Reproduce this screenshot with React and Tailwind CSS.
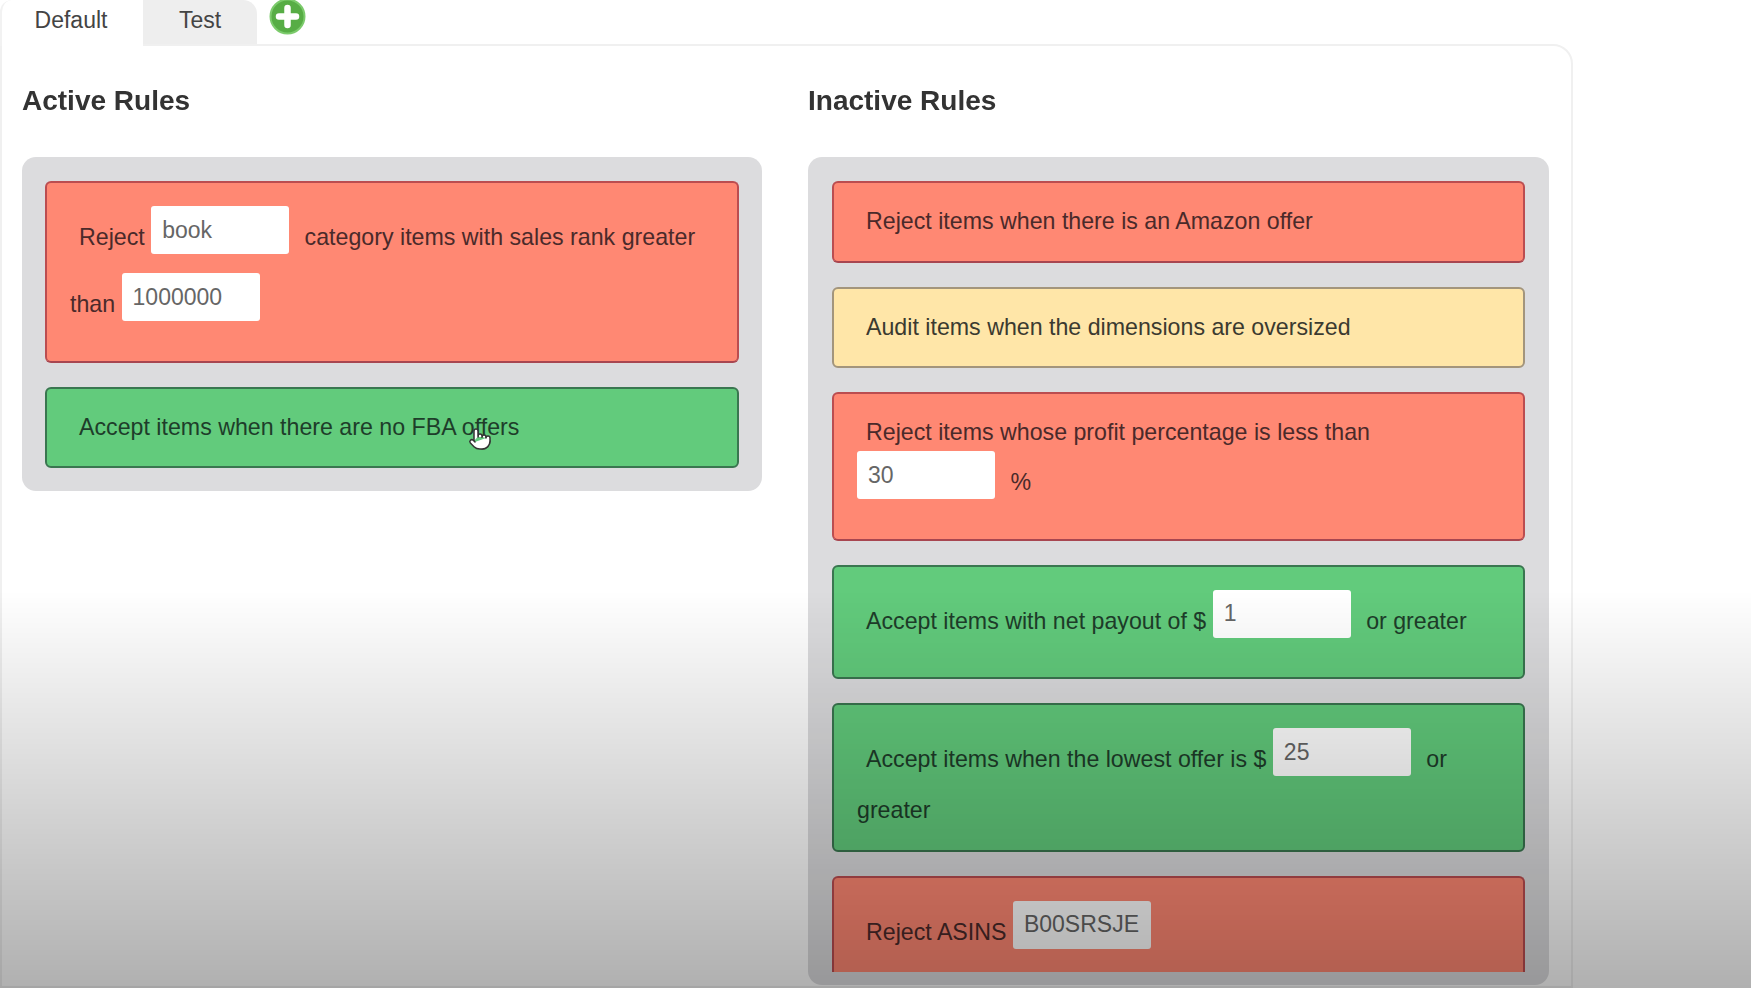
import React from 'react'
import { Pointer } from 'lucide-react'

const tones = {
  red: 'bg-[#ff8873] border-[#bb4d50] border-b-[#a84650] text-[#4a2a2a]',
  green: 'bg-[#62cb7c] border-[#3a7650] text-[#1e3d2a]',
  yellow: 'bg-[#ffe6a8] border-[#a3957c] text-[#3b3a30]',
}

const Field = ({ value }) => (
  <input
    readOnly
    defaultValue={value}
    className="mt-[2px] mb-[17px] mr-[9px] inline-block h-[48px] w-[138px] rounded-[3px] bg-white px-[11px] align-[7px] indent-0 text-[23px] text-[#666] outline-none"
  />
)

const Rule = ({ tone, children }) => (
  <div className={`relative shrink-0 rounded-[6px] border-2 px-[23px] pt-[21px] pb-[22.5px] indent-[9px] text-[23.2px] leading-[34px] ${tones[tone]}`}>
    {children}
  </div>
)

const PlusBadge = () => (
  <svg width="37" height="37" viewBox="0 0 37 37" className="ml-[12px] -mt-[2px] shrink-0">
    <circle cx="18.5" cy="18.5" r="17" fill="#57ad45" stroke="#7ccb6c" strokeWidth="2" />
    <path d="M18.5 10v17M10 18.5h17" fill="none" stroke="#fff" strokeLinecap="round" strokeWidth="6.5" />
  </svg>
)

const App = () => {
  return (
    <div className="relative h-[988px] overflow-hidden bg-white font-['Liberation_Sans',Arial,sans-serif] text-[#333]">
      <div className="w-[1573px] blur-[0.7px]">
        <div className="relative z-10 flex h-[44px] items-start text-[23px] leading-[40px]">
          <div className="flex h-[46px] w-[143px] justify-center rounded-tl-[12px] border-l-2 border-[#f2f2f2] bg-white pr-[3px] text-[#444]">
            Default
          </div>
          <div className="flex h-[44px] w-[114px] justify-center rounded-tr-[14px] bg-[#eeeeee] text-[#444]">
            Test
          </div>
          <PlusBadge />
        </div>

        <div className="flex h-[944px] gap-[46px] rounded-tr-[20px] border-2 border-[#f0f0f0] pl-[20px] pr-[21px]">
          <div className="w-[740px] shrink-0">
            <h2 className="mt-[39px] mb-[40px] text-[28px] font-bold leading-[32px]">Active Rules</h2>
            <div className="flex flex-col gap-[24px] rounded-[14px] bg-[#dcdcde] px-[23px] pt-[24px] pb-[23px]">
              <Rule tone="red">
                Reject <Field value="book" /> category items with sales rank greater than <Field value="1000000" />
              </Rule>
              <Rule tone="green">
                Accept items when there are no FBA offers
                <Pointer size={24} className="absolute left-[421px] top-[38px] fill-white stroke-[#333]" strokeWidth={1.5} />
              </Rule>
            </div>
          </div>

          <div className="w-[741px] shrink-0">
            <h2 className="mt-[39px] mb-[40px] text-[28px] font-bold leading-[32px]">Inactive Rules</h2>
            <div className="h-[828px] rounded-[14px] bg-[#dcdcde] px-[24px] pt-[24px] pb-[13px]">
              <div className="flex h-full flex-col gap-[24px] overflow-hidden">
                <Rule tone="red">Reject items when there is an Amazon offer</Rule>
                <Rule tone="yellow">Audit items when the dimensions are oversized</Rule>
                <Rule tone="red">
                  Reject items whose profit percentage is less than <Field value="30" /> %
                </Rule>
                <Rule tone="green">
                  Accept items with net payout of $ <Field value="1" /> or greater
                </Rule>
                <Rule tone="green">
                  Accept items when the lowest offer is $ <Field value="25" /> or greater
                </Rule>
                <Rule tone="red">
                  Reject ASINS <Field value="B00SRSJE" />
                </Rule>
              </div>
            </div>
          </div>
        </div>
      </div>

      {/* video player shade over the bottom of the frame */}
      <div className="pointer-events-none absolute inset-x-0 top-[590px] bottom-0 bg-linear-to-b from-transparent to-black/[0.31]" />
    </div>
  )
}

export default App
